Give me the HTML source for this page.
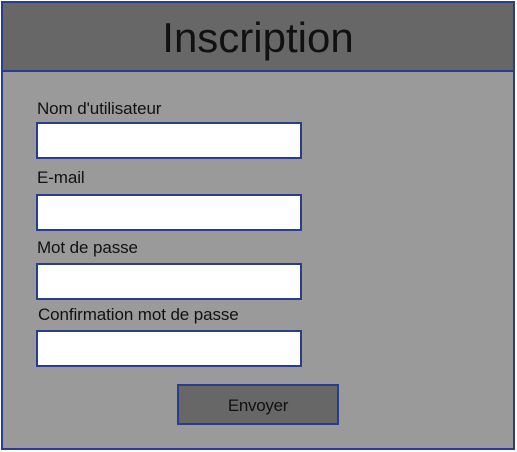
<!DOCTYPE html>
<html><head><style>
body{margin:0;width:517px;height:452px;background:#fff;font-family:"Liberation Sans",Arial,sans-serif;position:relative;overflow:hidden}
.box{position:absolute;left:1px;top:1px;width:510px;height:445px;border:2px solid #283e8c;background:#9a9a9a}
.hd{position:absolute;left:0;top:0;width:510px;height:67px;background:#676767;border-bottom:2px solid #283e8c;text-align:center;font-size:42px;line-height:70px;color:#111}
.l{position:absolute;font-size:17px;color:#111;letter-spacing:-0.1px}
.i{position:absolute;left:33px;width:262px;height:33px;background:#fff;border:2px solid #283e8c}
.b{position:absolute;left:174px;top:381px;width:158px;height:37px;background:#676767;border:2px solid #283e8c;text-align:center;line-height:39px;font-size:17px;color:#111;letter-spacing:-0.3px}
</style></head><body>
<div class="box">
<div class="hd">Inscription</div>
<div class="l" style="left:34px;top:96px">Nom d'utilisateur</div>
<div class="i" style="top:119px"></div>
<div class="l" style="left:34px;top:165px">E-mail</div>
<div class="i" style="top:191px"></div>
<div class="l" style="left:34px;top:235px">Mot de passe</div>
<div class="i" style="top:260px"></div>
<div class="l" style="left:35px;top:302px">Confirmation mot de passe</div>
<div class="i" style="top:327px"></div>
<div class="b">Envoyer</div>
</div>
</body></html>
